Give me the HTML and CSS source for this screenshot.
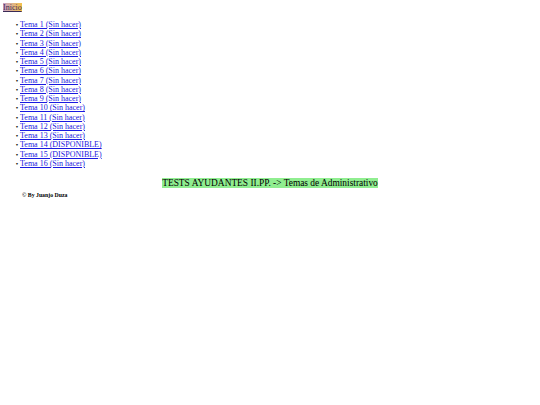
FILE: index.html
```html
<!DOCTYPE html>
<html lang="es">
<head>
<meta charset="utf-8">
<title>Temas</title>
<link rel="stylesheet" href="styles.css">
</head>
<body>
<div class="top"><a class="inicio" href="#">Inicio</a></div>
<ul class="temas">
<li><a href="#">Tema 1 (Sin hacer)</a></li>
<li><a href="#">Tema 2 (Sin hacer)</a></li>
<li><a href="#">Tema 3 (Sin hacer)</a></li>
<li><a href="#">Tema 4 (Sin hacer)</a></li>
<li><a href="#">Tema 5 (Sin hacer)</a></li>
<li><a href="#">Tema 6 (Sin hacer)</a></li>
<li><a href="#">Tema 7 (Sin hacer)</a></li>
<li><a href="#">Tema 8 (Sin hacer)</a></li>
<li><a href="#">Tema 9 (Sin hacer)</a></li>
<li><a href="#">Tema 10 (Sin hacer)</a></li>
<li><a href="#">Tema 11 (Sin hacer)</a></li>
<li><a href="#">Tema 12 (Sin hacer)</a></li>
<li><a href="#">Tema 13 (Sin hacer)</a></li>
<li><a href="#">Tema 14 (DISPONIBLE)</a></li>
<li><a href="#">Tema 15 (DISPONIBLE)</a></li>
<li><a href="#">Tema 16 (Sin hacer)</a></li>
</ul>
<div class="titulo"><span class="titulo-text">TESTS AYUDANTES II.PP. -&gt; Temas de Administrativo</span></div>
<p class="autor">© By Juanjo Duza</p>
</body>
</html>
```
FILE: styles.css
```css
html, body {
  background: #ffffff;
}
body {
  margin: 3px;
  font-family: "Liberation Serif", "Times New Roman", serif;
  font-size: 8px;
  color: #000;
}
.top {
  line-height: 9px;
}
.inicio {
  color: #3a2a55;
  background: linear-gradient(90deg, #c8a2c8, #f4c24a);
  text-decoration: underline;
}
.temas {
  margin: 8px 0 0 0;
  padding-left: 17px;
}
.temas li {
  line-height: 9.27px;
}
.temas li::marker {
  content: "\2022  ";
  font-size: 7px;
  color: #000;
}
.temas a {
  color: #1a1ae0;
}
.titulo {
  text-align: center;
  margin-top: 10px;
  font-size: 9.4px;
}
.titulo-text {
  background: #90ee90;
}
.autor {
  margin: 4px 0 0 19px;
  font-size: 5.8px;
  font-weight: bold;
}
```
